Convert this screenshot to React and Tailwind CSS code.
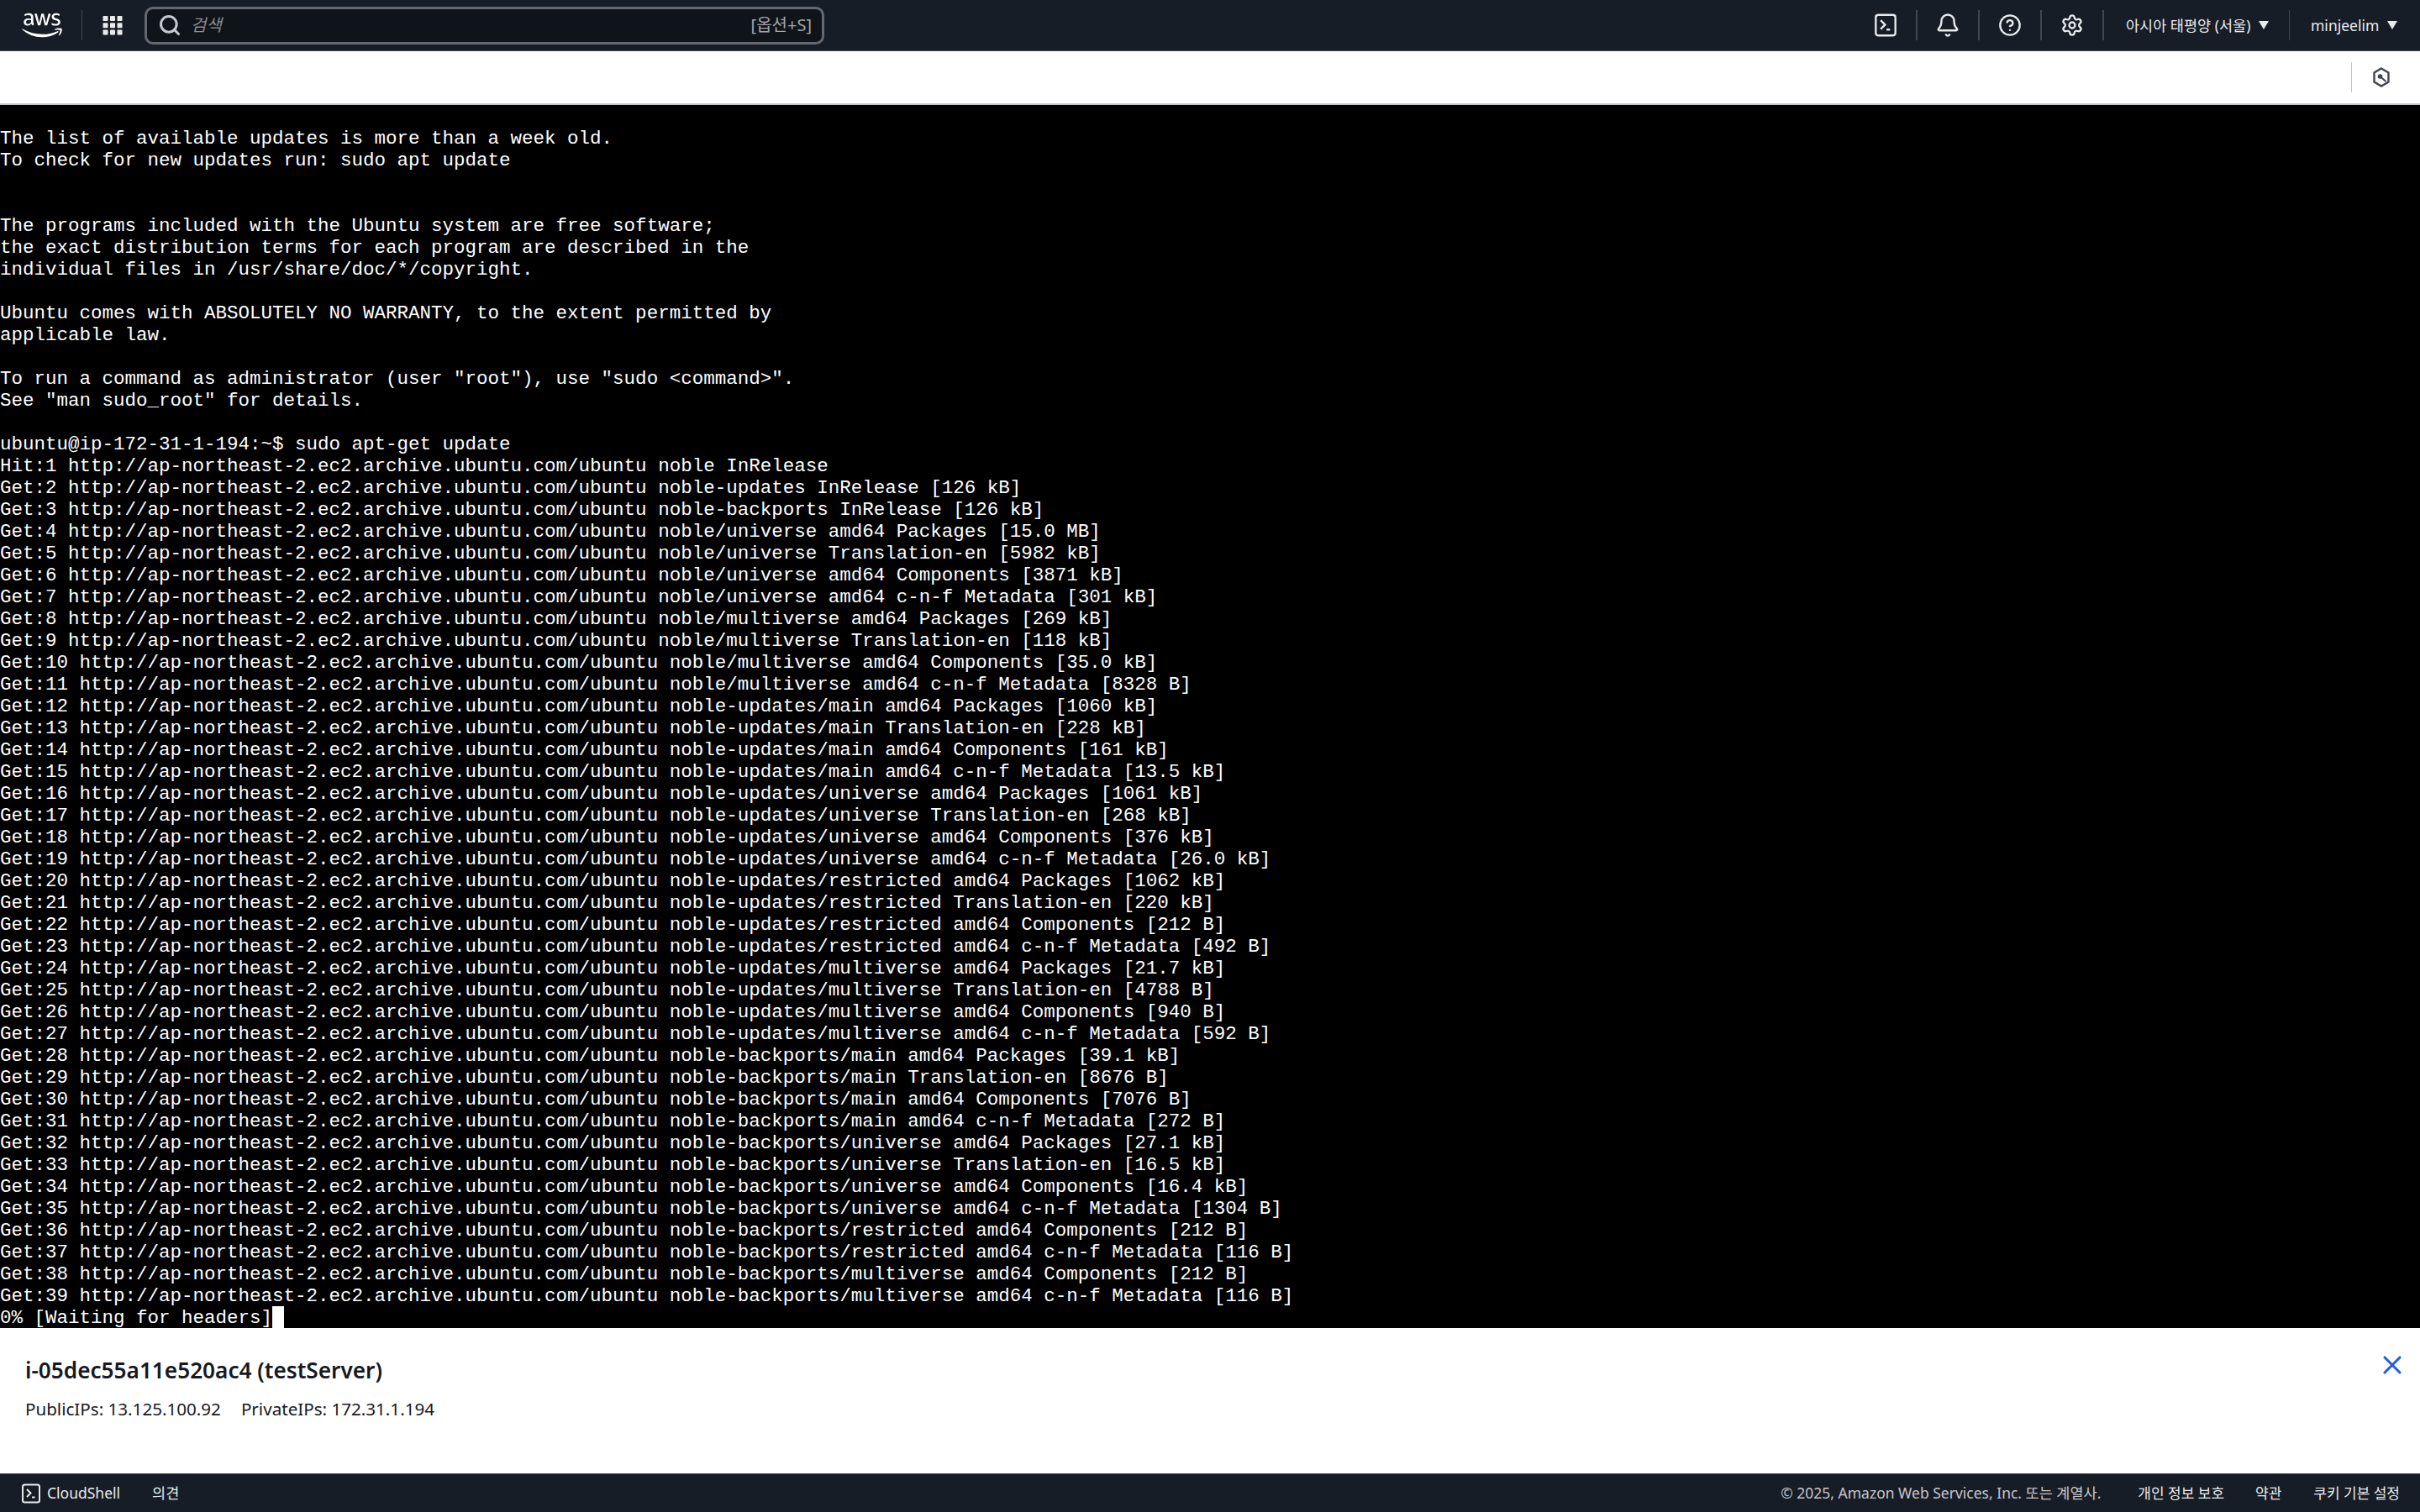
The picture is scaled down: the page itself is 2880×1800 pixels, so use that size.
import { FaAws } from 'react-icons/fa'
import { Bell, CircleHelp, Search, Settings, X } from 'lucide-react'

const UI_FONT = 'font-["Noto_Sans","Noto_Sans_CJK_KR",sans-serif]'
const KR = 'http://ap-northeast-2.ec2.archive.ubuntu.com/ubuntu'

const TERMINAL_LINES = [
  'The list of available updates is more than a week old.',
  'To check for new updates run: sudo apt update',
  '',
  '',
  'The programs included with the Ubuntu system are free software;',
  'the exact distribution terms for each program are described in the',
  'individual files in /usr/share/doc/*/copyright.',
  '',
  'Ubuntu comes with ABSOLUTELY NO WARRANTY, to the extent permitted by',
  'applicable law.',
  '',
  'To run a command as administrator (user "root"), use "sudo <command>".',
  'See "man sudo_root" for details.',
  '',
  'ubuntu@ip-172-31-1-194:~$ sudo apt-get update',
  `Hit:1 ${KR} noble InRelease`,
  `Get:2 ${KR} noble-updates InRelease [126 kB]`,
  `Get:3 ${KR} noble-backports InRelease [126 kB]`,
  `Get:4 ${KR} noble/universe amd64 Packages [15.0 MB]`,
  `Get:5 ${KR} noble/universe Translation-en [5982 kB]`,
  `Get:6 ${KR} noble/universe amd64 Components [3871 kB]`,
  `Get:7 ${KR} noble/universe amd64 c-n-f Metadata [301 kB]`,
  `Get:8 ${KR} noble/multiverse amd64 Packages [269 kB]`,
  `Get:9 ${KR} noble/multiverse Translation-en [118 kB]`,
  `Get:10 ${KR} noble/multiverse amd64 Components [35.0 kB]`,
  `Get:11 ${KR} noble/multiverse amd64 c-n-f Metadata [8328 B]`,
  `Get:12 ${KR} noble-updates/main amd64 Packages [1060 kB]`,
  `Get:13 ${KR} noble-updates/main Translation-en [228 kB]`,
  `Get:14 ${KR} noble-updates/main amd64 Components [161 kB]`,
  `Get:15 ${KR} noble-updates/main amd64 c-n-f Metadata [13.5 kB]`,
  `Get:16 ${KR} noble-updates/universe amd64 Packages [1061 kB]`,
  `Get:17 ${KR} noble-updates/universe Translation-en [268 kB]`,
  `Get:18 ${KR} noble-updates/universe amd64 Components [376 kB]`,
  `Get:19 ${KR} noble-updates/universe amd64 c-n-f Metadata [26.0 kB]`,
  `Get:20 ${KR} noble-updates/restricted amd64 Packages [1062 kB]`,
  `Get:21 ${KR} noble-updates/restricted Translation-en [220 kB]`,
  `Get:22 ${KR} noble-updates/restricted amd64 Components [212 B]`,
  `Get:23 ${KR} noble-updates/restricted amd64 c-n-f Metadata [492 B]`,
  `Get:24 ${KR} noble-updates/multiverse amd64 Packages [21.7 kB]`,
  `Get:25 ${KR} noble-updates/multiverse Translation-en [4788 B]`,
  `Get:26 ${KR} noble-updates/multiverse amd64 Components [940 B]`,
  `Get:27 ${KR} noble-updates/multiverse amd64 c-n-f Metadata [592 B]`,
  `Get:28 ${KR} noble-backports/main amd64 Packages [39.1 kB]`,
  `Get:29 ${KR} noble-backports/main Translation-en [8676 B]`,
  `Get:30 ${KR} noble-backports/main amd64 Components [7076 B]`,
  `Get:31 ${KR} noble-backports/main amd64 c-n-f Metadata [272 B]`,
  `Get:32 ${KR} noble-backports/universe amd64 Packages [27.1 kB]`,
  `Get:33 ${KR} noble-backports/universe Translation-en [16.5 kB]`,
  `Get:34 ${KR} noble-backports/universe amd64 Components [16.4 kB]`,
  `Get:35 ${KR} noble-backports/universe amd64 c-n-f Metadata [1304 B]`,
  `Get:36 ${KR} noble-backports/restricted amd64 Components [212 B]`,
  `Get:37 ${KR} noble-backports/restricted amd64 c-n-f Metadata [116 B]`,
  `Get:38 ${KR} noble-backports/multiverse amd64 Components [212 B]`,
  `Get:39 ${KR} noble-backports/multiverse amd64 c-n-f Metadata [116 B]`,
]

function ShellIcon({ className }) {
  return (
    <svg className={className} viewBox="0 0 24 24" fill="none" stroke="currentColor" strokeWidth={2}>
      <rect x="2" y="1.5" width="20" height="21" rx="2.5" />
      <path d="M7 7l4.5 4.5L7 16M13 16.5h3.5" />
    </svg>
  )
}

function GridIcon() {
  return (
    <svg className="h-6 w-6 text-[#e9ebed]" viewBox="0 0 24 24" fill="currentColor">
      {[1, 9.25, 17.5].flatMap((y) =>
        [0.5, 9, 17.5].map((x) => <rect key={`${x}-${y}`} x={x} y={y} width="6" height="6" rx="0.8" />),
      )}
    </svg>
  )
}

function Caret() {
  return (
    <svg className="h-[10px] w-3 text-[#e9ebed]" viewBox="0 0 12 10" fill="currentColor">
      <path d="M0 0h12L6 10z" />
    </svg>
  )
}

function NavIcon({ children }) {
  return (
    <div className="flex h-9 w-[74px] items-center justify-center border-r-2 border-[#414750] text-[#e9ebed]">
      {children}
    </div>
  )
}

function TopNav() {
  return (
    <header className="flex h-[61px] shrink-0 items-center border-b border-[#414750] bg-[#161d26] pl-[26px]">
      <div className="flex h-9 w-[72px] items-center border-r border-[#414750]">
        <FaAws className="h-[38px] w-[48px] text-white" />
      </div>
      <div className="ml-6 mr-[26px]">
        <GridIcon />
      </div>
      <div className="flex h-[45px] w-[809px] items-center rounded-[10px] border-[3px] border-[#656871] bg-[#0f141a] pl-[13px] pr-[12px]">
        <Search className="h-7 w-7 text-[#c6c6cd]" strokeWidth={2.6} />
        <span className="ml-[11px] text-[20px] text-[#8c8c94] italic">검색</span>
        <span className="ml-auto text-[20px] text-[#a4a4ad]">[옵션+S]</span>
      </div>
      <div className="ml-auto flex items-center">
        <NavIcon>
          <ShellIcon className="h-7 w-7" />
        </NavIcon>
        <NavIcon>
          <Bell className="h-[30px] w-[30px]" strokeWidth={1.9} />
        </NavIcon>
        <NavIcon>
          <CircleHelp className="h-7 w-7" strokeWidth={2} />
        </NavIcon>
        <NavIcon>
          <Settings className="h-7 w-7" strokeWidth={2} />
        </NavIcon>
        <div className="flex h-9 w-[221px] items-center gap-[10px] border-r border-[#414750] pl-[26px] text-[17.5px] text-[#e9ebed]">
          <span>아시아 태평양 (서울)</span>
          <Caret />
        </div>
        <div className="flex h-9 w-[155px] items-center gap-[10px] pl-[25px] text-[17.5px] text-[#e9ebed]">
          <span>minjeelim</span>
          <Caret />
        </div>
      </div>
    </header>
  )
}

function SubBar() {
  return (
    <div className="flex h-[64px] shrink-0 items-center justify-end border-b-2 border-[#c6c6cd] bg-white">
      <div className="flex h-9 w-[82px] items-center border-l border-[#c6c6cd] pl-[23px]">
        <svg className="h-6 w-6 text-[#424650]" viewBox="0 0 24 24" fill="none" stroke="currentColor" strokeWidth={2.4}>
          <path d="M12 1.5l8.5 5v11l-8.5 5-8.5-5v-11z" />
          <circle cx="10.5" cy="11" r="2.8" fill="currentColor" stroke="none" />
          <path d="M11 11.5l6.5 5.5" strokeWidth={2.2} />
        </svg>
      </div>
    </div>
  )
}

function Terminal() {
  return (
    <main className="min-h-0 flex-1 bg-black pt-[26px] font-['Liberation_Mono',monospace] text-[22.5px] leading-[28px] text-white">
      {TERMINAL_LINES.map((line, index) => (
        <div key={index} className="h-[26px] whitespace-pre">
          {line}
        </div>
      ))}
      <div className="flex h-[26px] whitespace-pre">
        <span>0% [Waiting for headers]</span>
        <span className="h-[26px] w-[14px] bg-white" />
      </div>
    </main>
  )
}

function InstancePanel() {
  return (
    <section className="flex h-[173px] shrink-0 justify-between bg-white pl-[30px] pr-[15px] pt-[30px] text-[#16191f]">
      <div>
        <h1 className="text-[26.2px] leading-[40px] font-semibold">i-05dec55a11e520ac4 (testServer)</h1>
        <p className="mt-[6px] flex gap-[24px] text-[20.6px] leading-[40px]">
          <span>PublicIPs: 13.125.100.92</span>
          <span>PrivateIPs: 172.31.1.194</span>
        </p>
      </div>
      <X className="-mt-[4px] h-9 w-9 text-[#295eda]" strokeWidth={2.1} />
    </section>
  )
}

function Footer() {
  return (
    <footer className="flex h-[46px] shrink-0 items-center border-t border-[#414750] bg-[#161d26] pl-[25px] pr-[24px] text-[17.5px] text-[#e9ebed]">
      <ShellIcon className="h-6 w-6" />
      <span className="ml-[7px]">CloudShell</span>
      <span className="ml-[38px]">의견</span>
      <span className="ml-auto text-[#c6c6cd]">© 2025, Amazon Web Services, Inc. 또는 계열사.</span>
      <span className="ml-[44px] text-[17px]">개인 정보 보호</span>
      <span className="ml-[37px] text-[17px]">약관</span>
      <span className="ml-[38px] text-[17px]">쿠키 기본 설정</span>
    </footer>
  )
}

export default function App() {
  return (
    <div className={`flex h-[1800px] w-[2880px] flex-col overflow-hidden ${UI_FONT}`}>
      <TopNav />
      <SubBar />
      <Terminal />
      <InstancePanel />
      <Footer />
    </div>
  )
}
